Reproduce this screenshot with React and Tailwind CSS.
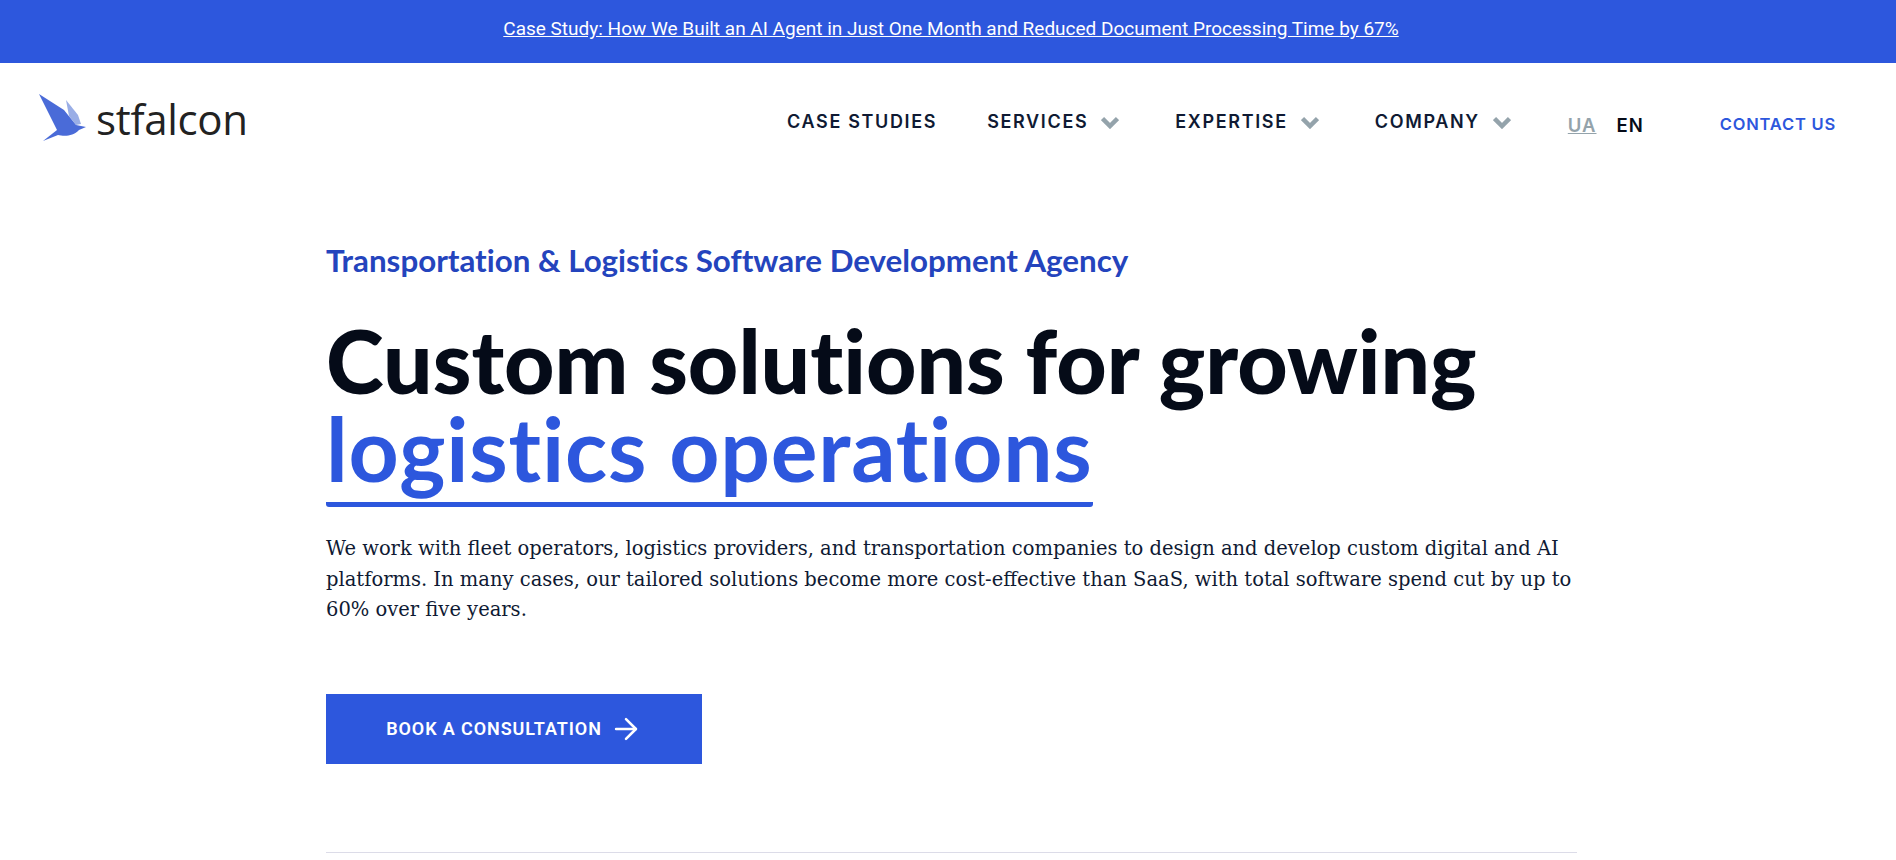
import React from 'react';
import { ArrowRight } from 'lucide-react';

function Chevron() {
    return (
        <svg width="18" height="13" viewBox="0 0 18 13" className="ml-[13px] mr-[6px] mt-[3px]">
            <path d="M1.5 2.5 L9 10 L16.5 2.5" fill="none" stroke="#94a3ab" strokeWidth="4.5" />
        </svg>
    );
}

function Logo() {
    return (
        <div className="flex items-center">
            <svg width="48" height="48" viewBox="0 0 48 48" className="mt-[-2px]">
                <path d="M27 6 L39 21 L42 30 L37 31 L30 22 Z" fill="#9aaee6" />
                <path d="M0 0 L25 16 L37 31 L47 33 L40 36 C34 43 24 42 19 41 L4 47 L18 36 Z" fill="#4a6bd8" />
            </svg>
            <span className="ml-[9px] text-[42px] leading-none font-medium text-[#222222] font-['Open_Sans',sans-serif] tracking-[-0.3px]">stfalcon</span>
        </div>
    );
}

function NavItem({ label, arrow }) {
    return (
        <a className="flex items-center text-[18px] font-semibold tracking-[1.65px] text-[#0f1a33] font-['Inter',sans-serif]">
            {label}
            {arrow && <Chevron />}
        </a>
    );
}

export default function App() {
    return (
        <div className="bg-white min-h-[860px] h-[860px] overflow-hidden">
            <div className="h-[63px] bg-[#2d57dd] flex items-center justify-center pb-[4px] pl-[6px]">
                <a className="text-[19px] text-white underline font-['Roboto',sans-serif]">
                    Case Study: How We Built an AI Agent in Just One Month and Reduced Document Processing Time by 67%
                </a>
            </div>

            <header className="flex items-center justify-between pl-[39px] pr-[60px] pt-[33px]">
                <Logo />
                <nav className="flex items-center">
                    <div className="flex items-center gap-[50px] mt-[4px]">
                        <NavItem label="CASE STUDIES" />
                        <NavItem label="SERVICES" arrow />
                        <NavItem label="EXPERTISE" arrow />
                        <NavItem label="COMPANY" arrow />
                    </div>
                    <div className="flex items-center ml-[51px] mt-[13px] text-[18.5px] font-semibold font-['Inter',sans-serif] tracking-[1px]">
                        <a className="text-[#94a3ab] underline">UA</a>
                        <a className="ml-[20px] text-[#050b18]">EN</a>
                    </div>
                    <a className="ml-[76px] mt-[11px] text-[16.5px] font-semibold tracking-[0.8px] text-[#2d57dd] font-['Inter',sans-serif]">CONTACT US</a>
                </nav>
            </header>

            <main className="ml-[326px] w-[1251px] mt-[100px]">
                <p className="text-[31.3px] leading-[36px] font-bold text-[#2444bd] font-['Lato',sans-serif] [font-variant-ligatures:none]">
                    Transportation &amp; Logistics Software Development Agency
                </p>
                <h1 className="mt-[39px] text-[87.5px] leading-[88px] font-black text-[#050b18] font-['Lato',sans-serif] [font-variant-ligatures:none]">
                    Custom solutions for growing
                    <br />
                    <span className="inline-block text-[#2d57dd] font-bold tracking-[0.8px] border-b-[5px] border-[#2d57dd] rounded-[3px] pb-[9px]">logistics operations</span>
                </h1>
                <p className="mt-[27px] text-[19.5px] leading-[30.5px] text-[#0f1a33] font-['DejaVu_Serif',serif]">
                    We work with fleet operators, logistics providers, and transportation companies to design and develop custom digital and AI platforms. In many cases, our tailored solutions become more cost-effective than SaaS, with total software spend cut by up to 60% over five years.
                </p>
                <a className="mt-[68px] flex items-center justify-center w-[376px] h-[70px] pr-[5px] bg-[#2d57dd] text-white text-[18px] font-semibold tracking-[0.9px] font-['Roboto',sans-serif]">
                    BOOK A CONSULTATION
                    <ArrowRight size={34} strokeWidth={1.8} className="ml-[7px] -mr-[6px]" />
                </a>
                <div className="mt-[88px] h-px bg-[#dcdce8]" />
            </main>
        </div>
    );
}
